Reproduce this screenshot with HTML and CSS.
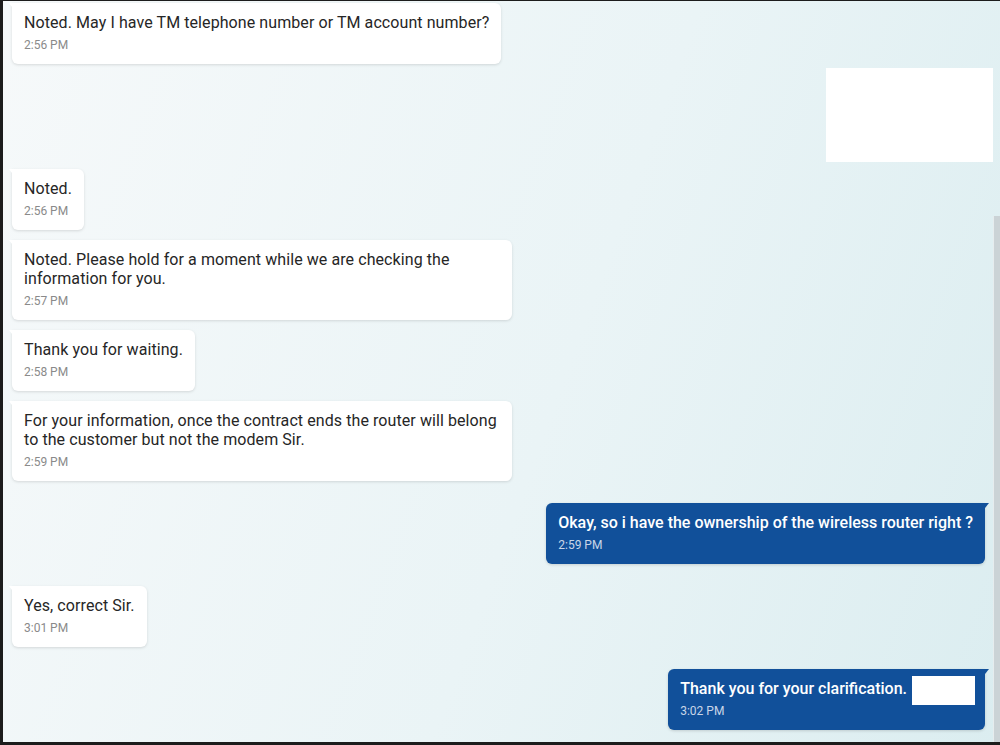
FILE: index.html
```html
<!DOCTYPE html>
<html lang="en">
<head>
    <meta charset="UTF-8">
    <meta name="viewport" content="width=device-width, initial-scale=1.0">
    <title>Chat</title>
    <link rel="stylesheet" href="styles.css">
</head>
<body>
    <div class="frame">
        <div class="messages">
            <div class="bubble agent">
                <div class="text">Noted. May I have TM telephone number or TM account number?</div>
                <div class="time">2:56 PM</div>
            </div>
            <div class="redacted"></div>
            <div class="bubble agent first">
                <div class="text">Noted.</div>
                <div class="time">2:56 PM</div>
            </div>
            <div class="bubble agent">
                <div class="text">Noted. Please hold for a moment while we are checking the information for you.</div>
                <div class="time">2:57 PM</div>
            </div>
            <div class="bubble agent">
                <div class="text">Thank you for waiting.</div>
                <div class="time">2:58 PM</div>
            </div>
            <div class="bubble agent">
                <div class="text">For your information, once the contract ends the router will belong to the customer but not the modem Sir.</div>
                <div class="time">2:59 PM</div>
            </div>
            <div class="bubble user">
                <div class="text">Okay, so i have the ownership of the wireless router right ?</div>
                <div class="time">2:59 PM</div>
            </div>
            <div class="bubble agent switch">
                <div class="text">Yes, correct Sir.</div>
                <div class="time">3:01 PM</div>
            </div>
            <div class="bubble user">
                <div class="text">Thank you for your clarification. <span class="blank"></span></div>
                <div class="time">3:02 PM</div>
            </div>
        </div>
        <div class="scrollbar">
            <div class="thumb"></div>
        </div>
    </div>
</body>
</html>
```

FILE: styles.css
```css
html, body {
    margin: 0;
    padding: 0;
}

body {
    font-family: Roboto, "Liberation Sans", sans-serif;
    background-color: #1c1c1c;
}

.frame {
    display: flex;
    height: 741px;
    border-top: 1px solid #1c1c1c;
    border-left: 3px solid #1c1c1c;
    border-bottom: 3px solid #1c1c1c;
    background: linear-gradient(110deg, #f6f9fa 0%, #eaf4f6 55%, #dbedf0 100%);
    overflow: hidden;
}

.messages {
    flex: 1;
    display: flex;
    flex-direction: column;
    align-items: flex-start;
    padding: 2px 8px 0 9px;
}

.bubble {
    position: relative;
    max-width: 476px;
    padding: 10px 12px 11px 12px;
    border-radius: 6px;
    margin-top: 10px;
}

.bubble:first-child {
    margin-top: 0;
}

.agent {
    background-color: #ffffff;
    color: #262626;
    border-top-left-radius: 0;
    box-shadow: 0 1px 3px rgba(0, 0, 0, 0.13);
}

.agent .text {
    letter-spacing: 0.08px;
}

.agent::before {
    content: "";
    position: absolute;
    left: -3px;
    top: 0;
    border-top: 4px solid #ffffff;
    border-left: 3px solid transparent;
}

.user {
    align-self: flex-end;
    background-color: #11509a;
    color: #ffffff;
    border-top-right-radius: 0;
    margin-top: 22px;
    box-shadow: 0 1px 3px rgba(0, 0, 0, 0.15);
}

.user::after {
    content: "";
    position: absolute;
    right: -4px;
    top: 0;
    border-top: 5px solid #11509a;
    border-right: 4px solid transparent;
}

.agent.switch {
    margin-top: 22px;
}

.agent.first {
    margin-top: 7px;
}

.text {
    font-size: 16px;
    line-height: 19px;
}

.user .text {
    font-weight: 500;
}

.time {
    font-size: 12px;
    line-height: 16px;
    margin-top: 5px;
    color: #8a8a8a;
}

.user .time {
    color: #c9d6e8;
}

.blank {
    display: inline-block;
    width: 63px;
    height: 29px;
    margin: -3px -2px -7px 1px;
    vertical-align: top;
    background-color: #ffffff;
}

.redacted {
    align-self: flex-end;
    width: 167px;
    height: 94px;
    margin: 4px -8px 0 0;
    background-color: #ffffff;
}

.scrollbar {
    width: 7px;
    padding-top: 215px;
    display: flex;
}

.thumb {
    flex: 1;
    background-color: #cbd3d6;
    border-left: 1px solid #e6ecee;
}
```
